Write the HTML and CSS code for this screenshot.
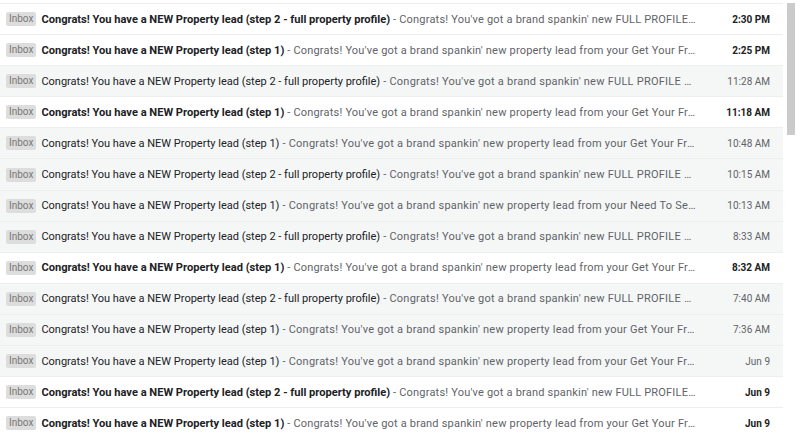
FILE: index.html
```html
<!DOCTYPE html>
<html lang="en">
<head>
  <meta charset="UTF-8">
  <title>Inbox</title>
  <meta name="viewport" content="width=device-width, initial-scale=1.0">
  <link rel="stylesheet" href="styles.css">
</head>
<body>

  <div class="mailbox">

    <!-- Message list -->
    <div class="list">
      <div class="row unread">
        <span class="tag">Inbox</span>
        <div class="line"><span class="subject">Congrats! You have a NEW Property lead (step 2 - full property profile)</span><span class="snippet"> - Congrats! You've got a brand spankin' new FULL PROFILE property lead from your Get Your Free Offer form</span></div>
        <span class="time">2:30 PM</span>
      </div>
      <div class="row unread">
        <span class="tag">Inbox</span>
        <div class="line"><span class="subject">Congrats! You have a NEW Property lead (step 1)</span><span class="snippet"> - Congrats! You've got a brand spankin' new property lead from your Get Your Free Offer form</span></div>
        <span class="time">2:25 PM</span>
      </div>
      <div class="row">
        <span class="tag">Inbox</span>
        <div class="line"><span class="subject">Congrats! You have a NEW Property lead (step 2 - full property profile)</span><span class="snippet"> - Congrats! You've got a brand spankin' new FULL PROFILE property lead from your Get Your Free Offer form</span></div>
        <span class="time">11:28 AM</span>
      </div>
      <div class="row unread">
        <span class="tag">Inbox</span>
        <div class="line"><span class="subject">Congrats! You have a NEW Property lead (step 1)</span><span class="snippet"> - Congrats! You've got a brand spankin' new property lead from your Get Your Free Offer form</span></div>
        <span class="time">11:18 AM</span>
      </div>
      <div class="row">
        <span class="tag">Inbox</span>
        <div class="line"><span class="subject">Congrats! You have a NEW Property lead (step 1)</span><span class="snippet"> - Congrats! You've got a brand spankin' new property lead from your Get Your Free Offer form</span></div>
        <span class="time">10:48 AM</span>
      </div>
      <div class="row">
        <span class="tag">Inbox</span>
        <div class="line"><span class="subject">Congrats! You have a NEW Property lead (step 2 - full property profile)</span><span class="snippet"> - Congrats! You've got a brand spankin' new FULL PROFILE property lead from your Get Your Free Offer form</span></div>
        <span class="time">10:15 AM</span>
      </div>
      <div class="row">
        <span class="tag">Inbox</span>
        <div class="line"><span class="subject">Congrats! You have a NEW Property lead (step 1)</span><span class="snippet"> - Congrats! You've got a brand spankin' new property lead from your Need To Sell Fast form</span></div>
        <span class="time">10:13 AM</span>
      </div>
      <div class="row">
        <span class="tag">Inbox</span>
        <div class="line"><span class="subject">Congrats! You have a NEW Property lead (step 2 - full property profile)</span><span class="snippet"> - Congrats! You've got a brand spankin' new FULL PROFILE property lead from your Get Your Free Offer form</span></div>
        <span class="time">8:33 AM</span>
      </div>
      <div class="row unread">
        <span class="tag">Inbox</span>
        <div class="line"><span class="subject">Congrats! You have a NEW Property lead (step 1)</span><span class="snippet"> - Congrats! You've got a brand spankin' new property lead from your Get Your Free Offer form</span></div>
        <span class="time">8:32 AM</span>
      </div>
      <div class="row">
        <span class="tag">Inbox</span>
        <div class="line"><span class="subject">Congrats! You have a NEW Property lead (step 2 - full property profile)</span><span class="snippet"> - Congrats! You've got a brand spankin' new FULL PROFILE property lead from your Get Your Free Offer form</span></div>
        <span class="time">7:40 AM</span>
      </div>
      <div class="row">
        <span class="tag">Inbox</span>
        <div class="line"><span class="subject">Congrats! You have a NEW Property lead (step 1)</span><span class="snippet"> - Congrats! You've got a brand spankin' new property lead from your Get Your Free Offer form</span></div>
        <span class="time">7:36 AM</span>
      </div>
      <div class="row">
        <span class="tag">Inbox</span>
        <div class="line"><span class="subject">Congrats! You have a NEW Property lead (step 1)</span><span class="snippet"> - Congrats! You've got a brand spankin' new property lead from your Get Your Free Offer form</span></div>
        <span class="time">Jun 9</span>
      </div>
      <div class="row unread">
        <span class="tag">Inbox</span>
        <div class="line"><span class="subject">Congrats! You have a NEW Property lead (step 2 - full property profile)</span><span class="snippet"> - Congrats! You've got a brand spankin' new FULL PROFILE property lead from your Get Your Free Offer form</span></div>
        <span class="time">Jun 9</span>
      </div>
      <div class="row unread">
        <span class="tag">Inbox</span>
        <div class="line"><span class="subject">Congrats! You have a NEW Property lead (step 1)</span><span class="snippet"> - Congrats! You've got a brand spankin' new property lead from your Get Your Free Offer form</span></div>
        <span class="time">Jun 9</span>
      </div>
    </div>

    <!-- Scrollbar -->
    <div class="gutter">
      <div class="thumb"></div>
    </div>

  </div>

</body>
</html>
```

FILE: styles.css
```css
body {
  margin: 0;
  background: #fff;
  font-family: Roboto, 'Liberation Sans', Arial, sans-serif;
  font-size: 11px;
  color: #202124;
  overflow: hidden;
}

.mailbox {
  display: flex;
  height: 436px;
}

.list {
  flex: 1;
  min-width: 0;
  padding-top: 3px;
}

.row {
  display: flex;
  align-items: center;
  height: 30.1px;
  border-top: 1px solid #eceff1;
  background: rgba(242, 245, 245, 0.8);
  padding: 0 13px 0 6px;
}

.row.unread {
  background: #fff;
}

.tag {
  flex: none;
  background: #dddddd;
  color: #777;
  font-size: 10px;
  line-height: 14px;
  padding: 0 3px;
  border-radius: 2px;
  margin-right: 5px;
}

.line {
  flex: 1;
  min-width: 0;
  white-space: nowrap;
  overflow: hidden;
  text-overflow: ellipsis;
  color: #5f6368;
  letter-spacing: 0.25px;
}

.unread .line {
  letter-spacing: 0.2px;
}

.subject {
  color: #202124;
  letter-spacing: 0;
}

.unread .subject {
  font-weight: bold;
  font-size: 11.1px;
  letter-spacing: 0;
}

.time {
  flex: none;
  width: 74px;
  text-align: right;
  font-size: 10px;
  color: #5f6368;
}

.unread .time {
  font-weight: bold;
  color: #202124;
}

/* Scrollbar */
.gutter {
  flex: none;
  width: 17px;
  padding-top: 3px;
  background: #fff;
}

.thumb {
  width: 8px;
  height: 132px;
  margin-left: 4px;
  background: #cbcbcb;
}
```
